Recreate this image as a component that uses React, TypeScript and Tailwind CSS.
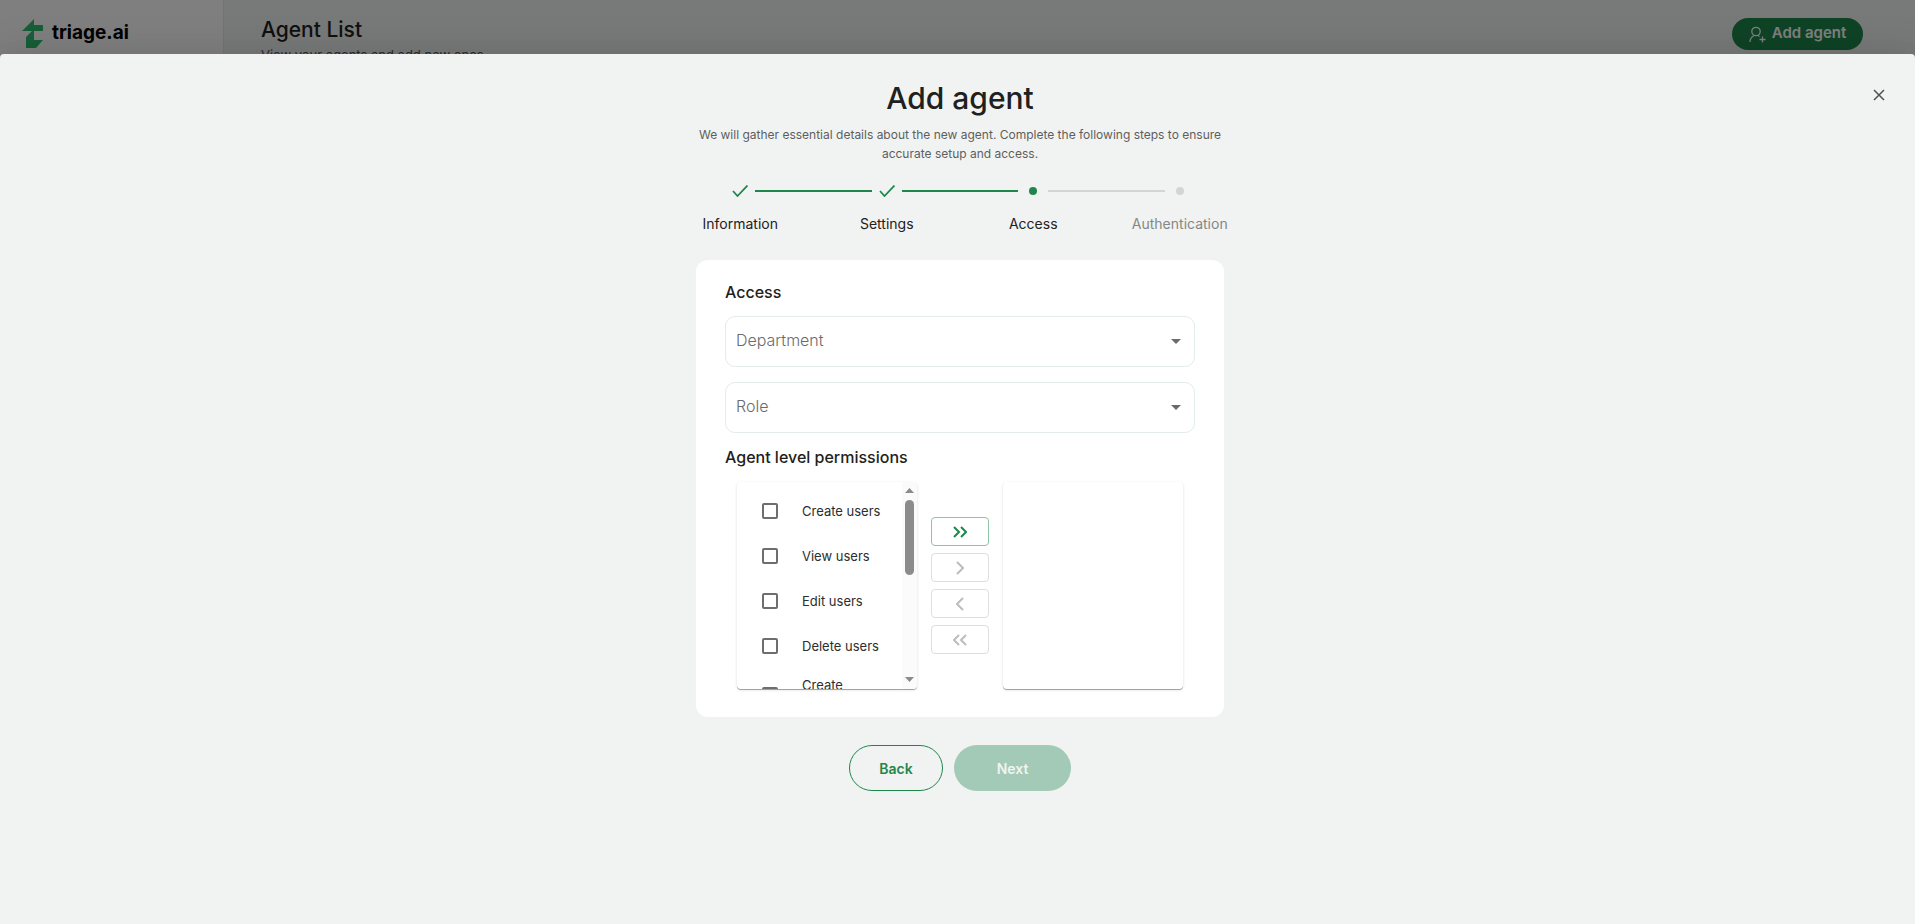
import { useState } from 'react'

const steps = [
  { label: 'Information', state: 'done' },
  { label: 'Settings', state: 'done' },
  { label: 'Access', state: 'active' },
  { label: 'Authentication', state: 'todo' },
]

const permissions = ['Create users', 'View users', 'Edit users', 'Delete users', 'Create departments']

const moves = [
  { label: 'Move all right', d: 'M1 2l5 5-5 5M8 2l5 5-5 5', width: 14, enabled: true },
  { label: 'Move selected right', d: 'M1 1l6 6-6 6', width: 8, enabled: false },
  { label: 'Move selected left', d: 'M7 1l-6 6 6 6', width: 8, enabled: false },
  { label: 'Move all left', d: 'M6 2l-5 5 5 5M13 2l-5 5 5 5', width: 14, enabled: false },
]

const paper =
  'h-[207px] w-[180px] rounded-[4px] bg-white overflow-hidden shadow-[0_1px_0_rgba(0,0,0,0.3),0_1px_3px_rgba(0,0,0,0.14)]'

function Logo() {
  return (
    <svg width="21" height="29" viewBox="0 0 21 29" fill="#2fbf71" aria-hidden="true">
      <path d="M12 0v6h9v6H0z" />
      <path d="M10 12h2v9h9l-7 8H4V18z" />
    </svg>
  )
}

function StepIcon({ state }: { state: string }) {
  if (state === 'done') {
    return (
      <svg width="16" height="12" viewBox="0 0 16 12" fill="none" stroke="#1f874c" strokeWidth="1.800" aria-hidden="true">
        <path d="M1 6l4.500 5L15.500 0.500" />
      </svg>
    )
  }
  return <span className={`h-2 w-2 rounded-full ${state === 'active' ? 'bg-[#1f874c]' : 'bg-[#d3d5d4]'}`} />
}

function Stepper() {
  return (
    <ol className="mt-4 flex w-[586px]">
      {steps.map((step, i) => (
        <li key={step.label} className="relative flex flex-1 flex-col items-center">
          {i > 0 && (
            <span
              className={`absolute top-[11px] right-[calc(50%+15px)] left-[calc(-50%+15px)] h-[2px] ${
                step.state === 'todo' ? 'bg-[#d3d5d4]' : 'bg-[#1f874c]'
              }`}
            />
          )}
          <span className="flex h-6 items-center">
            <StepIcon state={step.state} />
          </span>
          <span className={`mt-[11px] text-[14px] leading-5 ${step.state === 'todo' ? 'text-[#858786]' : 'text-[#1f2120]'}`}>
            {step.label}
          </span>
        </li>
      ))}
    </ol>
  )
}

function SelectField({ id, label }: { id: string; label: string }) {
  return (
    <div className="flex h-[51px] items-center rounded-[10px] border border-[#e1ede7] pr-[13px]">
      <label htmlFor={id} className="sr-only">
        {label}
      </label>
      <select
        id={id}
        defaultValue=""
        className="h-full flex-1 appearance-none bg-transparent pb-1 pl-[10px] text-[16px] leading-6 font-light text-[#6b6b6b] outline-none"
      >
        <option value="">{label}</option>
      </select>
      <svg width="10" height="5" viewBox="0 0 10 5" fill="#6b6b6b" className="pointer-events-none" aria-hidden="true">
        <path d="M0 0h10L5 5z" />
      </svg>
    </div>
  )
}

function PermissionList() {
  const [checked, setChecked] = useState<string[]>([])

  const toggle = (name: string) =>
    setChecked(checked.includes(name) ? checked.filter((c) => c !== name) : [...checked, name])

  return (
    <div className={`${paper} flex`}>
      <ul className="flex-1 overflow-hidden pt-[6px] pl-[25px]">
        {permissions.map((name) => (
          <li key={name}>
            <label className="flex min-h-[45px] items-center gap-6 py-[7px] text-[13px] leading-5 text-[#2c2e2d]">
              <input
                type="checkbox"
                checked={checked.includes(name)}
                onChange={() => toggle(name)}
                className="h-4 w-4 shrink-0 appearance-none rounded-[2px] border-2 border-[#6e6e6e] checked:bg-[#1f874c]"
              />
              <span>{name}</span>
            </label>
          </li>
        ))}
      </ul>
      <div className="flex w-[15px] flex-col items-center bg-[#fbfbfb] pt-[6px] pb-[7px]" aria-hidden="true">
        <svg width="9" height="5" viewBox="0 0 9 5" fill="#8b8b8b">
          <path d="M0 5h9L4.500 0z" />
        </svg>
        <span className="mt-[7px] h-[75px] w-[9px] rounded-full bg-[#8b8b8b]" />
        <svg width="9" height="5" viewBox="0 0 9 5" fill="#8b8b8b" className="mt-auto">
          <path d="M0 0h9L4.500 5z" />
        </svg>
      </div>
    </div>
  )
}

function PageHeader() {
  return (
    <div className="flex h-screen bg-[#f1f3f2]">
      <aside className="w-56 border-r border-[#e8e8e8] bg-white pt-[19px] pl-[22px]">
        <div className="flex items-center gap-[9px]">
          <Logo />
          <span className="pb-[2px] text-[19px] leading-6 font-bold text-black">triage.ai</span>
        </div>
      </aside>
      <header className="flex flex-1 items-start justify-between pr-[52px] pl-[37px]">
        <div className="pt-4">
          <h1 className="text-[21px] leading-7 font-medium text-[#1f2120]">Agent List</h1>
          <p className="mt-px text-[13px] leading-5 text-[#555756]">View your agents and add new ones.</p>
        </div>
        <button
          type="button"
          className="mt-[18px] flex h-8 w-[131px] items-center justify-center gap-[6px] rounded-full bg-[#1f874c] text-[15px] font-semibold text-white"
        >
          <svg width="17" height="17" viewBox="0 0 17 17" fill="none" stroke="currentColor" strokeWidth="1.300" aria-hidden="true">
            <circle cx="7" cy="5.500" r="4.200" />
            <path d="M1 16c0-3 1.500-5 4-6.500M9 9.500l1.500 1M13.500 10.500v6M10.500 13.500h6" />
          </svg>
          <span className="pb-[2px]">Add agent</span>
        </button>
      </header>
    </div>
  )
}

export default function App() {
  return (
    <div className="relative h-screen overflow-hidden font-[Inter,'Open_Sans',sans-serif]">
      <PageHeader />

      <div className="absolute inset-0 flex flex-col bg-black/50 pt-[54px]">
        <section
          role="dialog"
          aria-labelledby="dialog-title"
          className="relative flex flex-1 flex-col items-center rounded-t-[4px] bg-[#f1f3f2] pt-6 pl-[5px] shadow-[0_11px_15px_-7px_rgba(0,0,0,0.2),0_24px_38px_3px_rgba(0,0,0,0.14),0_9px_46px_8px_rgba(0,0,0,0.12)]"
        >
          <button type="button" aria-label="Close" className="absolute top-[29px] right-[24px] p-[6px] text-[#4f5150]">
            <svg width="12" height="12" viewBox="0 0 12 12" fill="none" stroke="currentColor" strokeWidth="1.500">
              <path d="M1 1l10 10M11 1L1 11" />
            </svg>
          </button>

          <h2 id="dialog-title" className="text-[30px] leading-10 font-medium text-[#1f2120]">
            Add agent
          </h2>
          <p className="mt-[7px] w-[550px] text-center text-[12px] leading-[19px] text-[#5d5f5e]">
            We will gather essential details about the new agent. Complete the following steps to ensure accurate setup
            and access.
          </p>

          <Stepper />

          <form className="mt-[26px] flex w-[528px] flex-col rounded-xl bg-white px-[29px] pt-5 pb-7">
            <h3 className="text-[16px] leading-6 font-medium text-[#1f2120]">Access</h3>
            <div className="mt-3 flex flex-col gap-[15px]">
              <SelectField id="department" label="Department" />
              <SelectField id="role" label="Role" />
            </div>
            <h3 className="mt-3 text-[16px] leading-6 font-medium text-[#1f2120]">Agent level permissions</h3>
            <div className="mt-[13px] flex items-center justify-center gap-[14px]">
              <PermissionList />
              <div className="flex flex-col gap-[7px]">
                {moves.map((m) => (
                  <button
                    key={m.label}
                    type="button"
                    aria-label={m.label}
                    disabled={!m.enabled}
                    className={`flex h-[29px] w-[58px] items-center justify-center rounded-[4px] border ${
                      m.enabled ? 'border-[#8fc3a6] text-[#1f874c]' : 'border-[#dedede] text-[#bdbdbd]'
                    }`}
                  >
                    <svg width={m.width} height="14" viewBox={`0 0 ${m.width} 14`} fill="none" stroke="currentColor" strokeWidth="2">
                      <path d={m.d} />
                    </svg>
                  </button>
                ))}
              </div>
              <div className={paper} />
            </div>
          </form>

          <div className="mt-7 flex gap-[11px] text-[14px] font-semibold">
            <button type="button" className="h-[46px] w-[94px] rounded-full border border-[#1f874c] text-[#1f874c]">
              Back
            </button>
            <button type="button" disabled className="h-[46px] w-[117px] rounded-full bg-[#a3cab6] text-[#f1f3f2]">
              Next
            </button>
          </div>
        </section>
      </div>
    </div>
  )
}
